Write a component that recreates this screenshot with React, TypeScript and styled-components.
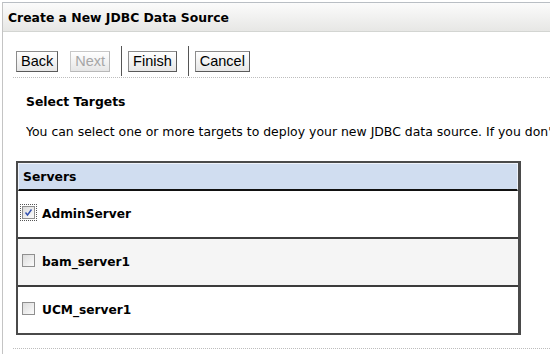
import React, { useState } from 'react';
import styled, { createGlobalStyle } from 'styled-components';

const GlobalStyle = createGlobalStyle`
  html, body {
    margin: 0;
    padding: 0;
    background: #ffffff;
    overflow: hidden;
  }
`;

const Panel = styled.div`
  margin: 2px 0 0 2px;
  height: 352px;
  border-top: 1px solid #b9bec4;
  border-left: 1px solid #c4c4c4;
  font-family: 'DejaVu Sans', Tahoma, sans-serif;
  color: #000;
  overflow: hidden;
`;

const TitleBar = styled.div`
  height: 28px;
  display: flex;
  align-items: center;
  padding-left: 5px;
  background: linear-gradient(#fbfbfb, #e7e7e5);
  border-bottom: 1px solid #d3d5d2;
  font-weight: bold;
  font-size: 12.4px;
  white-space: nowrap;
`;

const Toolbar = styled.div`
  display: flex;
  align-items: center;
  gap: 12px;
  padding: 13px 0 0 13px;
  height: 32px;
`;

const Button = styled.button<{ disabled?: boolean }>`
  font-family: 'Liberation Sans', Arial, sans-serif;
  font-size: 14.5px;
  height: 21px;
  padding: 0 4px;
  background: linear-gradient(#ffffff, #e6e6e6);
  border: 1px solid ${(p) => (p.disabled ? '#c8c8c8' : '#8c8c8c')};
  border-right-color: ${(p) => (p.disabled ? '#b8b8b8' : '#5a5a5a')};
  border-bottom-color: ${(p) => (p.disabled ? '#b8b8b8' : '#5a5a5a')};
  color: ${(p) => (p.disabled ? '#a6a6a6' : '#000')};
  border-radius: 0;
  line-height: 19px;
`;

const Separator = styled.div`
  width: 1px;
  height: 30px;
  background: #555;
  margin: 0 -6px 0 -1px;
`;

const Dotted = styled.div`
  margin-left: 10px;
  border-top: 1px dotted #bdbdbd;
`;

const Content = styled.div`
  padding: 0 0 0 23px;
`;

const Heading = styled.div`
  font-weight: bold;
  font-size: 12.4px;
  margin-top: 16px;
  white-space: nowrap;
`;

const Text = styled.div`
  font-size: 12.45px;
  margin-top: 15px;
  white-space: nowrap;
  overflow: hidden;
`;

const Table = styled.div`
  margin: 22px 0 0 13px;
  width: 500px;
  border: 2px solid #4a4a4a;
  border-right-width: 3px;
  border-bottom-width: 2px;
`;

const HeaderRow = styled.div`
  height: 25px;
  background: #d0ddf0;
  border: 1px solid #eef2fa;
  border-bottom: 2px solid #111;
  display: flex;
  align-items: center;
  padding-left: 4px;
  font-weight: bold;
  font-size: 12.4px;
`;

const Row = styled.div<{ alt?: boolean; last?: boolean }>`
  height: 46px;
  background: ${(p) => (p.alt ? '#f5f5f5' : '#ffffff')};
  border-bottom: ${(p) => (p.last ? 'none' : '2px solid #3c3c3c')};
  display: flex;
  align-items: center;
  padding-left: 4px;
  gap: 7px;
  font-weight: bold;
  font-size: 12.2px;
`;

const Box = styled.span<{ focused?: boolean }>`
  width: 11px;
  height: 11px;
  border: 1px solid #8f8f8f;
  background: linear-gradient(135deg, #dcdcdc, #fbfbfb);
  display: inline-flex;
  align-items: center;
  justify-content: center;
  outline: ${(p) => (p.focused ? '1px dotted #555' : 'none')};
  outline-offset: 1px;
  margin-top: -4px;
`;

const Footer = styled.div`
  margin-top: 13px;
`;

const servers = ['AdminServer', 'bam_server1', 'UCM_server1'];

export default function App() {
  const [checked, setChecked] = useState<string[]>(['AdminServer']);

  const toggle = (name: string) => {
    setChecked((c) => (c.includes(name) ? c.filter((n) => n !== name) : [...c, name]));
  };

  return (
    <>
      <GlobalStyle />
      <Panel>
        <TitleBar>Create a New JDBC Data Source</TitleBar>
        <Toolbar>
          <Button>Back</Button>
          <Button disabled>Next</Button>
          <Separator />
          <Button>Finish</Button>
          <Separator />
          <Button>Cancel</Button>
        </Toolbar>
        <Dotted />
        <Content>
          <Heading>Select Targets</Heading>
          <Text>You can select one or more targets to deploy your new JDBC data source. If you don'</Text>
        </Content>
        <Table>
          <HeaderRow>Servers</HeaderRow>
          {servers.map((name, i) => (
            <Row key={name} alt={i % 2 === 1} last={i === servers.length - 1} onClick={() => toggle(name)}>
              <Box focused={i === 0}>
                {checked.includes(name) && (
                  <svg width="9" height="9" viewBox="0 0 9 9">
                    <path d="M1.5 4.5 L3.5 7 L7.5 1.5" stroke="#3250b0" strokeWidth="1.4" fill="none" />
                  </svg>
                )}
              </Box>
              {name}
            </Row>
          ))}
        </Table>
        <Footer>
          <Dotted />
        </Footer>
      </Panel>
    </>
  );
}
